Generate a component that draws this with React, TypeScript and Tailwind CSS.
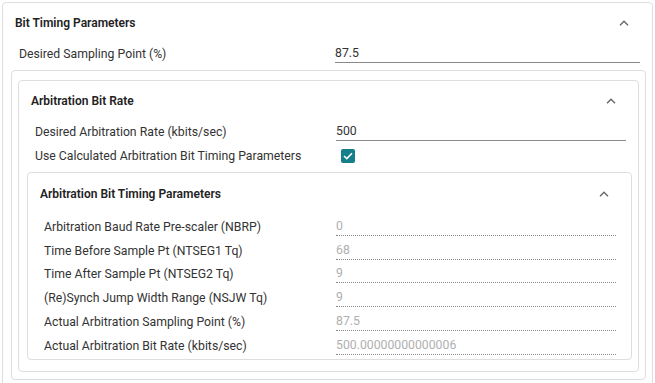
const font = { fontFamily: "Roboto, 'Liberation Sans', sans-serif" };

function Chevron() {
  return (
    <svg width="10" height="6" viewBox="0 0 10 6" className="text-[#666]" aria-hidden="true">
      <polyline points="1,5.2 5,1.2 9,5.2" fill="none" stroke="currentColor" strokeWidth="1.4" />
    </svg>
  );
}

function Header({ title, h }: { title: string; h: string }) {
  return (
    <div className={`flex items-center justify-between pl-[12px] pr-[22px] ${h}`}>
      <span className="text-[12px] font-semibold text-[#222]">{title}</span>
      <Chevron />
    </div>
  );
}

function EditRow({ label, value, labelW, inputW }: { label: string; value: string; labelW: string; inputW: string }) {
  return (
    <div className="flex h-[24px] items-center pl-[16px]">
      <span className={`${labelW} text-[12.25px] text-[#333]`}>{label}</span>
      <div className={`${inputW} h-[18px] border-b border-[#8a8a8a] text-[12.25px] leading-[17px] text-[#333]`}>{value}</div>
    </div>
  );
}

function ReadRow({ label, value }: { label: string; value: string }) {
  return (
    <div className="flex h-[23.8px] items-center pl-[16px]">
      <span className="w-[292px] text-[12.25px] text-[#333]">{label}</span>
      <div className="h-[18px] w-[280px] border-b border-dotted border-[#8a8a8a] text-[12.25px] leading-[17px] text-[#b0b0b0]">
        {value}
      </div>
    </div>
  );
}

export default function App() {
  const rows = [
    ["Arbitration Baud Rate Pre-scaler (NBRP)", "0"],
    ["Time Before Sample Pt (NTSEG1 Tq)", "68"],
    ["Time After Sample Pt (NTSEG2 Tq)", "9"],
    ["(Re)Synch Jump Width Range (NSJW Tq)", "9"],
    ["Actual Arbitration Sampling Point (%)", "87.5"],
    ["Actual Arbitration Bit Rate (kbits/sec)", "500.00000000000006"],
  ];
  return (
    <div className="h-[383px] w-[655px] overflow-hidden bg-white pl-[2px] pt-[2px]" style={font}>
      <div className="w-[651px] rounded-[4px] border border-[#dedede] pb-[10px]">
        <div className="flex h-[39px] items-center justify-between pl-[12px] pr-[23px]">
          <span className="text-[12px] font-semibold text-[#222]">Bit Timing Parameters</span>
          <Chevron />
        </div>
        <EditRow label="Desired Sampling Point (%)" value="87.5" labelW="w-[316px]" inputW="w-[305px]" />

        <div className="ml-[8px] mt-[4px] w-[635px] rounded-[4px] border border-[#dedede] pb-[7px] pl-[6px] pt-[9px]">
          <div className="w-[621px] rounded-[4px] border border-[#dedede] pb-[11px]">
            <Header title="Arbitration Bit Rate" h="h-[39px]" />
            <EditRow label="Desired Arbitration Rate (kbits/sec)" value="500" labelW="w-[301px]" inputW="w-[290px]" />
            <div className="flex h-[24px] items-center pl-[16px]">
              <span className="w-[306px] text-[12.25px] text-[#333]">Use Calculated Arbitration Bit Timing Parameters</span>
              <span className="flex h-[14px] w-[14px] items-center justify-center rounded-[2px] bg-[#157f8c]">
                <svg width="10" height="8" viewBox="0 0 10 8" aria-hidden="true">
                  <polyline points="1,4 3.8,6.6 9,1.2" fill="none" stroke="white" strokeWidth="1.6" />
                </svg>
              </span>
            </div>

            <div className="ml-[8px] mt-[4px] w-[605px] rounded-[4px] border border-[#dedede] pb-[1px]">
              <Header title="Arbitration Bit Timing Parameters" h="h-[42px]" />
              {rows.map(([l, v]) => (
                <ReadRow key={l} label={l} value={v} />
              ))}
            </div>
          </div>
        </div>
      </div>
    </div>
  );
}
